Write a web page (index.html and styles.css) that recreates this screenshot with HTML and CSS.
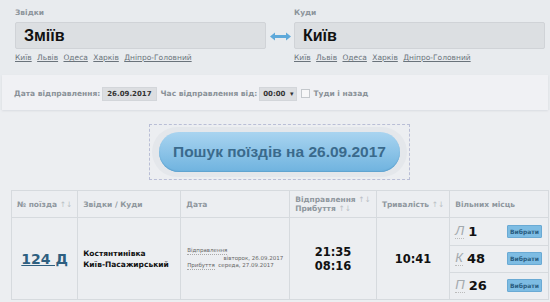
FILE: index.html
```html
<!DOCTYPE html>
<html lang="uk">
<head>
    <meta charset="UTF-8">
    <title>Пошук поїздів</title>
    <link rel="stylesheet" href="styles.css">
</head>
<body>
    <div class="search">
        <!-- Stations -->
        <div class="stations">
            <div class="station">
                <div class="label">Звідки</div>
                <div class="field">Зміїв</div>
                <div class="links">
                    <a href="#">Київ</a> <a href="#">Львів</a> <a href="#">Одеса</a> <a href="#">Харків</a> <a href="#">Дніпро-Головний</a>
                </div>
            </div>
            <div class="swap">
                <svg width="21" height="9" viewBox="0 0 21 9">
                    <path d="M0 4.5 L5 0.5 L5 3 L16 3 L16 0.5 L21 4.5 L16 8.5 L16 6 L5 6 L5 8.5 Z" fill="#5ea9da"/>
                </svg>
            </div>
            <div class="station">
                <div class="label">Куди</div>
                <div class="field">Київ</div>
                <div class="links">
                    <a href="#">Київ</a> <a href="#">Львів</a> <a href="#">Одеса</a> <a href="#">Харків</a> <a href="#">Дніпро-Головний</a>
                </div>
            </div>
        </div>
        <!-- Date and time -->
        <div class="options">
            <span class="opt-label">Дата відправлення:</span>
            <span class="date">26.09.2017</span>
            <span class="opt-label">Час відправлення від:</span>
            <span class="time">00:00 <span class="caret">&#9662;</span></span>
            <span class="check"></span>
            <span class="opt-label">Туди і назад</span>
        </div>
    </div>

    <div class="submit-wrap">
        <div class="submit-frame">
            <div class="submit-ring">
                <button class="submit">Пошук поїздів на 26.09.2017</button>
            </div>
        </div>
    </div>

    <table class="trains">
        <tr>
            <th class="c-num">№ поїзда <span class="sort">↑↓</span></th>
            <th class="c-route">Звідки / Куди</th>
            <th class="c-date">Дата</th>
            <th class="c-time">Відправлення <span class="sort">↑↓</span><br>Прибуття <span class="sort">↑↓</span></th>
            <th class="c-dur">Тривалість <span class="sort">↑↓</span></th>
            <th class="c-seats">Вільних місць</th>
        </tr>
        <tr>
            <td class="num"><a href="#">124 Д</a></td>
            <td class="route">Костянтинівка<br>Київ-Пасажирський</td>
            <td class="dates">
                <div class="d-label">Відправлення</div>
                <div class="d-right">вівторок, 26.09.2017</div>
                <div><span class="d-label">Прибуття</span>&nbsp; середа, 27.09.2017</div>
            </td>
            <td class="times">21:35<br>08:16</td>
            <td class="dur">10:41</td>
            <td class="seats">
                <div class="seat"><span class="type">Л</span><span class="count">1</span><button class="pick">Вибрати</button></div>
                <div class="seat"><span class="type">К</span><span class="count">48</span><button class="pick">Вибрати</button></div>
                <div class="seat"><span class="type">П</span><span class="count">26</span><button class="pick">Вибрати</button></div>
            </td>
        </tr>
    </table>
</body>
</html>
```

FILE: styles.css
```css
body {
    margin: 0;
    background: #eceef1;
    font-family: "DejaVu Sans", Verdana, sans-serif;
    color: #222;
}
.search {
    background: #e8ebee;
}
.stations {
    display: flex;
    padding: 8px 5px 0 15px;
    height: 67px;
}
.station {
    width: 251px;
}
.label {
    font-size: 7.5px;
    font-weight: bold;
    color: #8c949b;
    height: 14px;
}
.field {
    height: 25px;
    line-height: 25px;
    background: #dcdfe2;
    border: 1px solid #d0d3d7;
    border-radius: 2px;
    padding-left: 8px;
    font-family: "Liberation Sans", Arial, sans-serif;
    font-weight: bold;
    font-size: 16px;
    color: #111;
}
.links {
    margin-top: 4px;
    font-size: 7.5px;
    word-spacing: 3px;
}
.links a {
    color: #6a737b;
    word-spacing: 0;
}
.swap {
    width: 28px;
    display: flex;
    justify-content: center;
    padding-top: 24px;
}
.options {
    background: #f0f1f4;
    margin: 0 2px;
    height: 35px;
    display: flex;
    align-items: center;
    padding: 2px 0 0 12px;
    box-sizing: border-box;
    font-size: 7.5px;
    box-shadow: 0 1px 2px #d8dbe0;
}
.opt-label {
    color: #8a9198;
    font-weight: bold;
    margin-right: 2px;
}
.date, .time {
    background: #dcdee1;
    border: 1px solid #d3d6da;
    font-weight: bold;
    font-size: 7px;
    color: #333;
    padding: 2px 4px;
    margin-right: 4px;
}
.time {
    padding: 2px 3px;
}
.caret {
    font-size: 7px;
    margin-left: 2px;
}
.check {
    width: 7px;
    height: 7px;
    border: 1px solid #c4c8cc;
    background: #f7f7f8;
    margin-right: 3px;
}
.submit-wrap {
    display: flex;
    justify-content: center;
    padding: 14px 0 10px 0;
}
.submit-frame {
    border: 1px dashed #b9bed6;
    padding: 2px 2px;
    margin-left: 9px;
}
.submit-ring {
    background: #e4e7eb;
    border-radius: 26px;
    padding: 5px 7px;
}
.submit {
    width: 241px;
    height: 40px;
    border: none;
    border-radius: 20px;
    background: linear-gradient(#a9d4f0, #6fb3df);
    box-shadow: inset 0 -1px 1px #5fa2cf;
    color: #3a6a8c;
    font-family: "Liberation Sans", Arial, sans-serif;
    font-weight: bold;
    font-size: 15.5px;
}
.trains {
    margin-left: 11px;
    width: 538px;
    border-collapse: collapse;
    font-size: 7.5px;
}
th, td {
    border: 1px solid #d6dade;
}
th {
    height: 26px;
    text-align: left;
    padding: 0 5px;
    color: #8f979e;
    font-weight: bold;
    white-space: nowrap;
}
.sort {
    color: #b9bfc5;
    font-weight: normal;
}
.c-num { width: 53px; }
.c-route { width: 92px; }
.c-date { width: 98px; }
.c-time { width: 74px; }
.c-dur { width: 59px; }
td {
    height: 79px;
    vertical-align: middle;
}
.num {
    text-align: center;
}
.num a {
    color: #2e5f80;
    font-size: 14px;
    font-weight: bold;
}
.route {
    padding-left: 5px;
    font-weight: bold;
    font-size: 7.5px;
    line-height: 11px;
    color: #111;
    white-space: nowrap;
}
.dates {
    padding: 0 6px;
    font-size: 5.5px;
    color: #666;
    line-height: 7px;
}
.d-label {
    border-bottom: 1px dotted #aaa;
    display: inline-block;
}
.d-right {
    text-align: right;
}
.times, .dur {
    text-align: center;
    font-weight: bold;
    font-size: 11.5px;
    color: #111;
}
.seats {
    padding: 0;
}
.seat {
    height: 26px;
    display: flex;
    align-items: center;
    padding: 0 6px 0 5px;
    border-bottom: 1px solid #d6dade;
}
.seat:last-child {
    border-bottom: none;
}
.type {
    font-family: "Liberation Sans", Arial, sans-serif;
    font-style: italic;
    font-size: 13px;
    color: #a3a9ae;
    border-bottom: 1px dotted #bbb;
    margin-right: 4px;
    line-height: 14px;
}
.count {
    font-size: 13px;
    font-weight: bold;
    color: #111;
}
.pick {
    margin-left: auto;
    background: #7dbce3;
    border: 1px solid #6aaad4;
    color: #2a5d80;
    font-family: "DejaVu Sans", Verdana, sans-serif;
    font-weight: bold;
    font-size: 6px;
    padding: 2px 2px;
    border-radius: 1px;
}
```
